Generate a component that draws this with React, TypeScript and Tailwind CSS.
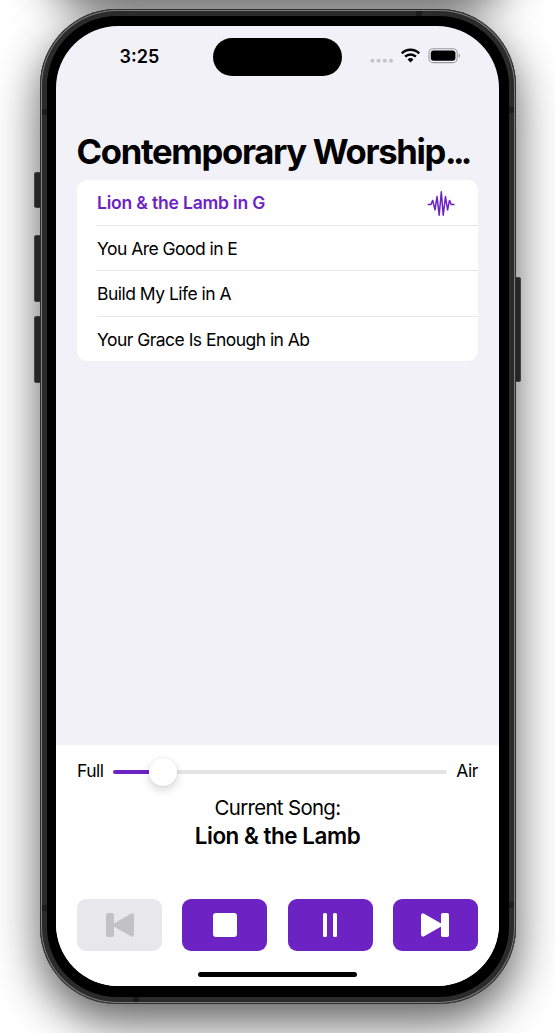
import React from "react";

const songs = [
  { title: "Lion & the Lamb in G", active: true, track: "tracking-[-0.18px]" },
  { title: "You Are Good in E", active: false, track: "tracking-[-0.54px]" },
  { title: "Build My Life in A", active: false, track: "tracking-[-0.52px]" },
  { title: "Your Grace Is Enough in Ab", active: false, track: "tracking-[-0.53px]" },
];

function Waveform() {
  return (
    <svg width="28" height="28" viewBox="0 0 28 28" fill="none" stroke="#6d23c3" strokeWidth="1.5" strokeLinecap="round" strokeLinejoin="round">
      <path d="M1.2 14.4H4L5.7 10.4L8 19.9L10 6.6L12.2 25.2L14.3 1.7L16.2 25.2L18.5 6.6L20.6 19.9L22.5 10.4L24.2 14.4H27" />
    </svg>
  );
}

function StatusIcons() {
  return (
    <svg width="92" height="18" viewBox="0 0 92 18">
      <g fill="#c5c5c8">
        <circle cx="2.4" cy="12.7" r="2.05" />
        <circle cx="8.6" cy="12.7" r="2.05" />
        <circle cx="14.8" cy="12.7" r="2.05" />
        <circle cx="21" cy="12.7" r="2.05" />
      </g>
      <g fill="none" stroke="#000" strokeWidth="2.4">
        <path d="M31.8 5.3a12.3 12.3 0 0 1 17.4 0" />
        <path d="M35.1 8.7a7.6 7.6 0 0 1 10.8 0" />
      </g>
      <path d="M37.6 11.4a4.2 4.2 0 0 1 5.8 0L40.5 14.4Z" />
      <rect x="59" y=".7" width="28.2" height="13.9" rx="4.2" fill="none" stroke="#9b9b9f" strokeWidth="1.1" />
      <rect x="60.8" y="2.5" width="24.6" height="10.3" rx="2.8" />
      <path d="M88.7 5.6c2 .8 2 3.4 0 4.2Z" fill="#9b9b9f" />
    </svg>
  );
}

function Skip({ flip = false }: { flip?: boolean }) {
  return (
    <svg width="30" height="26" viewBox="0 0 30 26" fill="currentColor" className={flip ? "-scale-x-100" : ""}>
      <rect x="1" y="1" width="8" height="24" rx="1.8" />
      <path d="M8.4 11.8 25.4 1.9Q29 .2 29 4V22Q29 25.8 25.4 24.1L8.4 14.2Q7.2 13 8.4 11.8Z" />
    </svg>
  );
}

const button = "flex h-[51.5px] w-[85px] items-center justify-center rounded-[9px]";

export default function App() {
  return (
    <main className="relative h-[1033px] w-[555px] overflow-hidden bg-white pt-[9px] pl-[40px] font-['Inter','Liberation_Sans',sans-serif] text-black">
      <div className="absolute top-[-206px] left-[40px] h-[200px] w-[476px] rounded-[70px] shadow-[0_20px_44px_rgba(0,0,0,0.58)]" />
      <div className="relative h-[995px] w-[476px]">
        <i className="absolute top-[163px] left-[-6px] h-[36px] w-[8px] rounded-l-[2px] border border-[#5b5b5b] bg-[#353535]" />
        <i className="absolute top-[226px] left-[-6px] h-[67px] w-[8px] rounded-l-[2px] border border-[#5b5b5b] bg-[#353535]" />
        <i className="absolute top-[307px] left-[-6px] h-[67px] w-[8px] rounded-l-[2px] border border-[#5b5b5b] bg-[#353535]" />
        <i className="absolute top-[268px] right-[-5px] h-[105px] w-[8px] rounded-r-[2px] border border-[#5b5b5b] bg-[#353535]" />
        <div className="relative h-full rounded-[77px] bg-black pt-[17px] pr-[17px] pb-[18px] pl-[16px] shadow-[0_18px_46px_rgba(0,0,0,0.64),inset_0_0_0_1px_#303030,inset_0_0_0_2px_#7c7c7c,inset_0_0_0_7px_#2b2b2b]">
          <i className="absolute top-[100px] left-[2px] h-[6px] w-[5px] bg-[#1c1c1c]" />
          <i className="absolute top-[98px] right-[2px] h-[6px] w-[5px] bg-[#1c1c1c]" />
          <i className="absolute top-[896px] left-[2px] h-[6px] w-[5px] bg-[#1c1c1c]" />
          <i className="absolute top-[893px] right-[2px] h-[6px] w-[5px] bg-[#1c1c1c]" />
          <i className="absolute top-[2px] left-[376px] h-[5px] w-[6px] bg-[#1c1c1c]" />
          <i className="absolute bottom-[2px] left-[93px] h-[5px] w-[6px] bg-[#1c1c1c]" />
          <div className="flex h-full flex-col overflow-hidden rounded-[62px] bg-[#f2f1f7]">
            <header className="flex h-[103px] shrink-0 pt-[12px]">
              <div className="w-[157px] pt-[7px] pl-[63.5px] text-[18px] leading-[24px] font-semibold">3:25</div>
              <div className="h-[37.5px] w-[129px] rounded-full bg-black" />
              <div className="pt-[10px] pl-[28px]"><StatusIcons /></div>
            </header>
            <h1 className="h-[51px] shrink-0 pl-[20.5px] text-[34.6px] leading-[45px] font-bold tracking-[-1.3px] whitespace-nowrap"><span>Contemporary Worship<span className="tracking-[-3.7px]">...</span></span></h1>
            <ul className="mx-[21px] shrink-0 rounded-[10px] bg-white pl-[20px]">
              {songs.map((s, i) => (
                <li key={s.title} className={"flex items-center justify-between pt-[2px] pr-[23px] text-[17.5px] " + (i < 3 ? "border-b border-[#e6e6e8] " : "") + (i === 0 ? "h-[46px] " : i === 3 ? "h-[44.6px] " : "h-[45.3px] ") + (s.active ? "font-semibold text-[#6d23c3]" : "")}>
                  <span className={s.track}>{s.title}</span>
                  {s.active && <Waveform />}
                </li>
              ))}
            </ul>
            <section className="mt-auto flex h-[241px] shrink-0 flex-col bg-white px-[21px] pt-[12px]">
              <div className="flex h-[29px] items-center text-[17.5px]">
                <span className="w-[36px] tracking-[-0.5px]">Full</span>
                <div className="flex flex-1 items-center">
                  <div className="h-[4px] w-[36px] rounded-l-full bg-[#6d23c3]" />
                  <div className="z-10 h-[28px] w-[28px] rounded-full bg-white shadow-[0_4px_10px_rgba(0,0,0,0.16),0_0_2px_rgba(0,0,0,0.1)]" />
                  <div className="h-[4px] flex-1 rounded-r-full bg-[#e4e4e5]" />
                </div>
                <span className="w-[31px] text-right tracking-[-0.4px]">Air</span>
              </div>
              <p className="mt-[7.5px] text-center text-[20.4px] leading-[28px] tracking-[-0.66px]"><span>Current Song:</span></p>
              <p className="text-center text-[22.4px] leading-[28px] font-semibold tracking-[-0.45px]"><span>Lion &amp; the Lamb</span></p>
              <div className="mt-[49.5px] flex justify-between">
                <button className={button + " bg-[#e8e8ea] text-[#c2c2c4]"}><Skip /></button>
                <button className={button + " bg-[#6d23c3] text-white"}><span className="h-[24px] w-[24px] rounded-[3px] bg-white" /></button>
                <button className={button + " gap-[6px] bg-[#6d23c3]"}><i className="h-[24px] w-[4px] rounded-[1.5px] bg-white" /><i className="h-[24px] w-[4px] rounded-[1.5px] bg-white" /></button>
                <button className={button + " bg-[#6d23c3] text-white"}><Skip flip /></button>
              </div>
              <div className="mx-auto mt-[21.5px] h-[5px] w-[159px] shrink-0 rounded-full bg-black" />
            </section>
          </div>
        </div>
      </div>
    </main>
  );
}
